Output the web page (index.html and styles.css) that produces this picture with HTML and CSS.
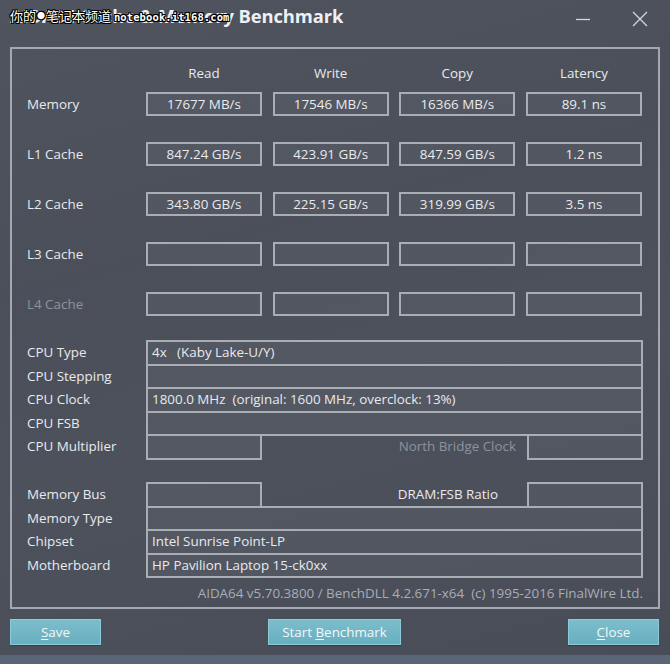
FILE: index.html
```html
<!DOCTYPE html>
<html>
<head>
<meta charset="utf-8">
<link rel="stylesheet" href="styles.css">
</head>
<body>
<div class="window">
  <div class="titlebar">
    <div class="title">AIDA64 Cache &amp; Memory Benchmark</div>
    <div class="watermark">你的<span class="wm-dot">●</span>笔记本频道 <span class="wm-url">notebook.it168.com</span></div>
    <div class="controls">
      <svg class="ctl" width="16" height="16" viewBox="0 0 16 16"><path d="M1 8.5h14" stroke="#d4d7dc" stroke-width="1.3" fill="none"/></svg>
      <svg class="ctl" width="16" height="16" viewBox="0 0 16 16"><path d="M1 1L15 15M15 1L1 15" stroke="#d4d7dc" stroke-width="1.3" fill="none"/></svg>
    </div>
  </div>

  <div class="group">
    <div class="bench head-row">
      <div></div>
      <div class="head">Read</div>
      <div class="head">Write</div>
      <div class="head">Copy</div>
      <div class="head">Latency</div>
    </div>
    <div class="bench rows">
      <div class="label">Memory</div>
      <div class="val">17677 MB/s</div>
      <div class="val">17546 MB/s</div>
      <div class="val">16366 MB/s</div>
      <div class="val">89.1 ns</div>

      <div class="label">L1 Cache</div>
      <div class="val">847.24 GB/s</div>
      <div class="val">423.91 GB/s</div>
      <div class="val">847.59 GB/s</div>
      <div class="val">1.2 ns</div>

      <div class="label">L2 Cache</div>
      <div class="val">343.80 GB/s</div>
      <div class="val">225.15 GB/s</div>
      <div class="val">319.99 GB/s</div>
      <div class="val">3.5 ns</div>

      <div class="label">L3 Cache</div>
      <div class="val"></div>
      <div class="val"></div>
      <div class="val"></div>
      <div class="val"></div>

      <div class="label dim">L4 Cache</div>
      <div class="val"></div>
      <div class="val"></div>
      <div class="val"></div>
      <div class="val"></div>
    </div>

    <div class="info cpu">
      <div class="irow"><div class="ilabel">CPU Type</div><div class="ibox wide">4x &nbsp; (Kaby Lake-U/Y)</div></div>
      <div class="irow"><div class="ilabel">CPU Stepping</div><div class="ibox wide"></div></div>
      <div class="irow"><div class="ilabel">CPU Clock</div><div class="ibox wide">1800.0 MHz &nbsp;(original: 1600 MHz, overclock: 13%)</div></div>
      <div class="irow"><div class="ilabel">CPU FSB</div><div class="ibox wide"></div></div>
      <div class="irow"><div class="ilabel">CPU Multiplier</div><div class="ibox small"></div><div class="mid dim nb">North Bridge Clock</div><div class="ibox small"></div></div>
    </div>

    <div class="info mem">
      <div class="irow"><div class="ilabel">Memory Bus</div><div class="ibox small"></div><div class="mid dram">DRAM:FSB Ratio</div><div class="ibox small"></div></div>
      <div class="irow"><div class="ilabel">Memory Type</div><div class="ibox wide"></div></div>
      <div class="irow"><div class="ilabel">Chipset</div><div class="ibox wide">Intel Sunrise Point-LP</div></div>
      <div class="irow"><div class="ilabel">Motherboard</div><div class="ibox wide">HP Pavilion Laptop 15-ck0xx</div></div>
    </div>

    <div class="footer">AIDA64 v5.70.3800 / BenchDLL 4.2.671-x64&nbsp; (c) 1995-2016 FinalWire Ltd.</div>
  </div>

  <div class="buttons">
    <div class="btn narrow"><u>S</u>ave</div>
    <div class="btn bench-btn">Start <u>B</u>enchmark</div>
    <div class="btn narrow"><u>C</u>lose</div>
  </div>
  <div class="strip"></div>
</div>
</body>
</html>
```

FILE: styles.css
```css
* { box-sizing: border-box; }
html, body { margin: 0; padding: 0; }
body {
  width: 670px;
  height: 664px;
  overflow: hidden;
  background: #4a4f5a;
  font-family: "Open Sans", "Noto Sans", sans-serif;
  font-size: 13.4px;
  color: #e9eaed;
}
.window {
  position: relative;
  width: 670px;
  height: 664px;
  display: flex;
  flex-direction: column;
  background: linear-gradient(165deg, #4f545f 0%, #4a4f5a 35%, #4c515c 60%, #484d58 100%);
}
.titlebar {
  position: relative;
  height: 47px;
  display: flex;
  align-items: flex-start;
  padding: 4px 0 0 10px;
}
.title {
  font-size: 18.4px;
  font-weight: 700;
  line-height: 24px;
  color: #eef0f2;
  letter-spacing: -0.1px;
}
.watermark {
  position: absolute;
  left: 10px;
  top: 8px;
  font-family: "Noto Sans CJK SC", sans-serif;
  font-size: 13px;
  line-height: 16px;
  color: #ffffff;
  text-shadow: 1px 0 0 #000, -1px 0 0 #000, 0 1px 0 #000, 0 -1px 0 #000, 1px 1px 0 #000, -1px -1px 0 #000, 1px -1px 0 #000, -1px 1px 0 #000;
  white-space: nowrap;
}
.wm-dot { font-size: 8px; vertical-align: 2px; margin: 0 1px; }
.wm-url {
  font-family: "DejaVu Sans Mono", "Liberation Mono", monospace;
  font-size: 10.5px;
  font-weight: 700;
  letter-spacing: 0.1px;
}
.controls {
  margin-left: auto;
  display: flex;
  gap: 41px;
  padding: 7px 22px 0 0;
}
.ctl { display: block; }

.group {
  margin: 0 10px 0 10px;
  height: 562px;
  border: 2px solid #a4a8b0;
  padding: 15px 15px 0 15px;
  display: flex;
  flex-direction: column;
}
.bench {
  display: grid;
  grid-template-columns: 108.33px repeat(4, 116px);
  column-gap: 10.67px;
}
.head-row { height: 18px; margin-bottom: 10px; }
.head { text-align: center; line-height: 18px; }
.rows { grid-auto-rows: 24px; row-gap: 26px; }
.label { line-height: 24px; white-space: nowrap; }
.dim { color: #8d939d; }
.val {
  border: 2px solid #a9adb4;
  background: rgba(255, 255, 255, 0.045);
  text-align: center;
  line-height: 20px;
}

.info { display: flex; flex-direction: column; }
.cpu { margin-top: 24px; }
.mem { margin-top: 22.5px; }
.irow {
  display: flex;
  height: 25.5px;
  align-items: stretch;
}
.irow + .irow { margin-top: -2px; }
.ilabel {
  width: 119px;
  flex: none;
  line-height: 25.5px;
  white-space: nowrap;
}
.ibox {
  border: 2px solid #a9adb4;
  background: rgba(255, 255, 255, 0.045);
  line-height: 21.5px;
  padding-left: 4px;
  white-space: nowrap;
}
.ibox.wide { flex: 1; }
.ibox.small { width: 116px; flex: none; }
.mid {
  flex: 1;
  text-align: right;
  line-height: 25.5px;
  white-space: nowrap;
}
.nb { padding-right: 11px; }
.dram { padding-right: 29px; }

.footer {
  margin-top: 6px;
  text-align: right;
  line-height: 18px;
  color: #a9adb4;
}

.buttons {
  display: flex;
  justify-content: space-between;
  padding: 10px 11px 0 10px;
}
.btn {
  height: 26px;
  line-height: 24px;
  text-align: center;
  color: #f4f7f8;
  background: linear-gradient(#7cbdcc, #68afc0);
  border: 1px solid #8ccad8;
  box-shadow: 0 1px 0 rgba(0,0,0,0.25);
}
.btn u { text-underline-offset: 2px; }
.narrow { width: 91px; }
.bench-btn { width: 133px; }
.strip {
  margin-top: auto;
  height: 9px;
  background: #5a6678;
}
```
